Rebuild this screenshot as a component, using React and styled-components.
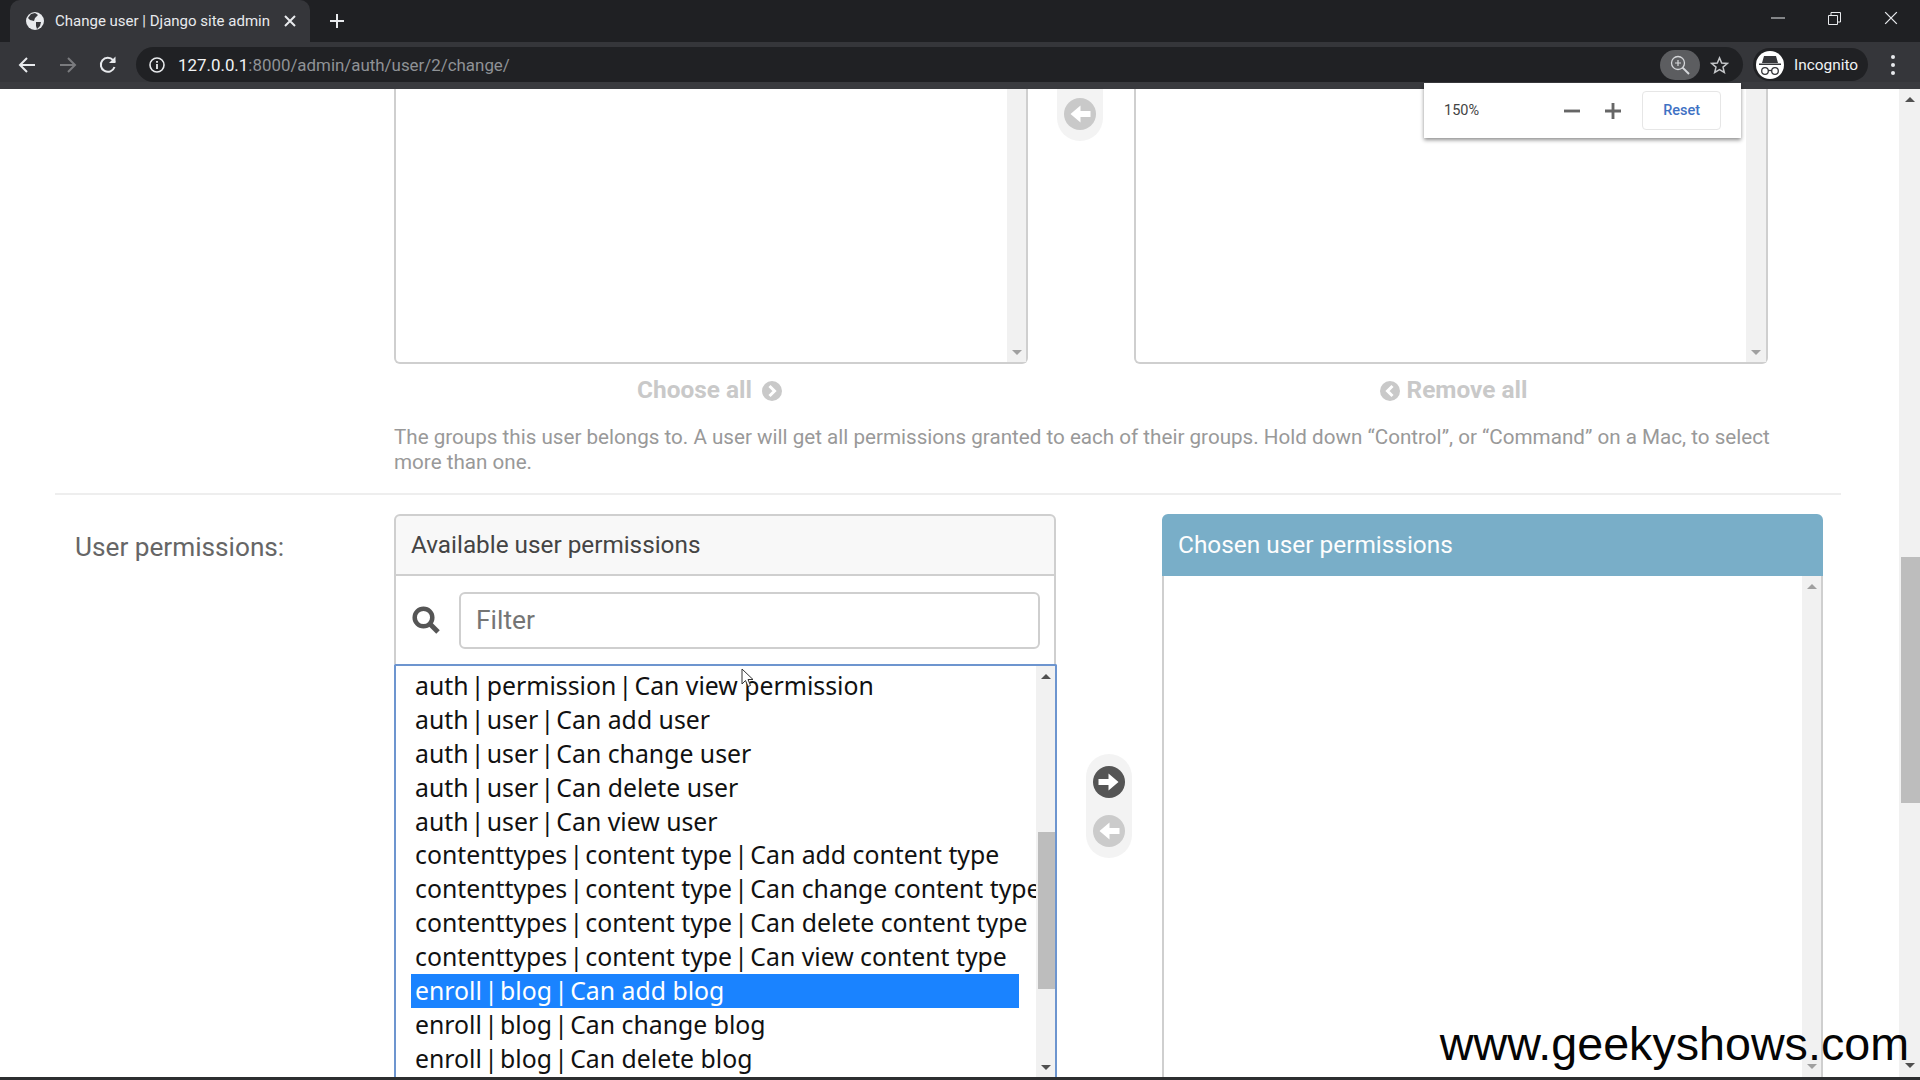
import React from "react";
import styled, { createGlobalStyle } from "styled-components";

const GlobalStyle = createGlobalStyle`
    html, body {
        margin: 0;
        padding: 0;
        background: white;
        overflow: hidden;
    }
    * {
        box-sizing: border-box;
    }
`;

const Frame = styled.div`
    width: 1920px;
    height: 1080px;
    display: flex;
    flex-direction: column;
    overflow: hidden;
    position: relative;
    font-family: Roboto, "Liberation Sans", sans-serif;
`;

/* browser chrome */

const TabStrip = styled.div`
    height: 42px;
    flex: none;
    background: #1f2023;
    display: flex;
    align-items: stretch;
    padding-left: 10px;
`;

const Tab = styled.div`
    width: 300px;
    background: #35363a;
    border-radius: 10px 10px 0 0;
    display: flex;
    align-items: center;
    padding: 0 0 0 16px;
    color: #e8eaed;
    font-size: 15px;
`;

const TabTitle = styled.span`
    margin-left: 11px;
    width: 229px;
    white-space: nowrap;
`;

const NewTab = styled.div`
    margin-left: 16px;
    width: 22px;
    display: flex;
    align-items: center;
    justify-content: center;
`;

const WindowControls = styled.div`
    margin-left: auto;
    display: flex;
    align-items: center;
    padding: 0 22px 6px 0;
    gap: 43px;
`;

const ToolBar = styled.div`
    height: 47px;
    flex: none;
    background: #35363a;
    border-bottom: 7px solid #3a3b3f;
    display: flex;
    align-items: center;
    padding: 5px 0 0 17px;
`;

const NavIcons = styled.div`
    display: flex;
    align-items: center;
    gap: 20.5px;
    width: 119px;
`;

const Omnibox = styled.div`
    width: 1607px;
    height: 35px;
    border-radius: 18px;
    background: #202124;
    display: flex;
    align-items: center;
    padding-left: 13px;
`;

const Url = styled.div`
    margin-left: 13px;
    font-size: 16.9px;
    color: #8f9296;
    white-space: nowrap;

    b {
        font-weight: 400;
        color: #f1f3f4;
    }
`;

const LensPill = styled.div`
    margin-left: auto;
    width: 40px;
    height: 30px;
    border-radius: 15px;
    background: #5c5d60;
    display: flex;
    align-items: center;
    justify-content: center;
`;

const StarWrap = styled.div`
    width: 43px;
    padding-right: 4px;
    display: flex;
    justify-content: center;
`;

const ProfilePill = styled.div`
    margin-left: 10px;
    width: 115px;
    height: 33px;
    border-radius: 17px;
    background: #202124;
    display: flex;
    align-items: center;
    padding-left: 3px;
    color: #f1f3f4;
    font-size: 15.4px;
`;

const Avatar = styled.div`
    width: 28px;
    height: 28px;
    border-radius: 50%;
    background: white;
    display: flex;
    align-items: center;
    justify-content: center;
    margin-right: 10px;
`;

const MenuDots = styled.div`
    margin-left: 23px;
    display: flex;
    flex-direction: column;
    gap: 4px;

    i {
        width: 4px;
        height: 4px;
        border-radius: 50%;
        background: #e8eaed;
    }
`;

const ZoomPopup = styled.div`
    position: absolute;
    left: 1424px;
    top: 83px;
    width: 317px;
    height: 55px;
    background: white;
    box-shadow: 0 2px 4px rgba(0, 0, 0, 0.45);
    display: flex;
    align-items: center;
    padding: 0 20px;
    color: #444;
    font-size: 14.5px;
    z-index: 5;
`;

const ZoomValue = styled.span`
    width: 108px;
`;

const ZoomStep = styled.div`
    width: 41px;
    display: flex;
    justify-content: center;
`;

const ResetButton = styled.button`
    margin-left: 9px;
    width: 79px;
    height: 39px;
    background: white;
    border: 1px solid #e6e6e6;
    border-radius: 4px;
    color: #3f72c4;
    font-family: Roboto, sans-serif;
    font-size: 14.5px;
    font-weight: 500;
`;

/* page */

const Viewport = styled.div`
    flex: 1;
    display: flex;
    min-height: 0;
`;

const Content = styled.div`
    width: 1899px;
    overflow: hidden;
`;

const GroupsRow = styled.div`
    display: flex;
    padding-left: 394px;
`;

const GroupColumn = styled.div`
    width: ${(p) => p.$width}px;
`;

const StubBox = styled.div`
    height: 275px;
    display: flex;
    justify-content: flex-end;
    border: 2px solid #cfcfcf;
    border-top: none;
    border-radius: 0 0 6px 6px;
`;

const ScrollTrack = styled.div`
    width: ${(p) => p.$width || 19}px;
    flex: none;
    background: #f1f1f1;
    display: flex;
    flex-direction: column;
    align-items: center;
    justify-content: ${(p) => (p.$downOnly ? "flex-end" : "space-between")};
    padding: ${(p) => p.$pad || "8px 0"};
    position: relative;
`;

const ArrowUp = styled.div`
    width: 0;
    height: 0;
    border-left: 5px solid transparent;
    border-right: 5px solid transparent;
    border-bottom: 5px solid ${(p) => p.$color || "#505050"};
`;

const ArrowDown = styled.div`
    width: 0;
    height: 0;
    border-left: 5px solid transparent;
    border-right: 5px solid transparent;
    border-top: 5px solid ${(p) => p.$color || "#505050"};
`;

const ScrollThumb = styled.div`
    position: absolute;
    right: 0;
    top: ${(p) => p.$top}px;
    width: ${(p) => p.$width}px;
    height: ${(p) => p.$height}px;
    background: #bdbdbd;
`;

const ActionRow = styled.div`
    height: 53px;
    display: flex;
    align-items: center;
    justify-content: center;
    gap: ${(p) => p.$gap}px;
    padding: ${(p) => p.$pad};
    color: #c9c9c9;
    font-size: 24.4px;
    font-weight: 700;
`;

const TopMoverColumn = styled.div`
    width: 106px;
    display: flex;
    justify-content: center;
    padding-right: 2px;
`;

const MoverPill = styled.div`
    width: 46px;
    padding: ${(p) => p.$pad};
    height: ${(p) => p.$height}px;
    border-radius: ${(p) => p.$radius};
    background: #f3f3f3;
    display: flex;
    flex-direction: column;
    align-items: center;
    gap: 17px;
`;

const HelpText = styled.p`
    margin: 8px 0 0 394px;
    width: 1385px;
    font-size: 20.63px;
    line-height: 25px;
    color: #999;
`;

const Divider = styled.div`
    height: 2px;
    background: #eeeeee;
    margin: 18px 58px 0 55px;
`;

const PermissionsRow = styled.div`
    display: flex;
    padding: 19px 0 0 75px;
`;

const FieldLabel = styled.label`
    width: 319px;
    padding-top: 17px;
    font-size: 26.2px;
    line-height: 32px;
    color: #666;
`;

const Selector = styled.div`
    width: ${(p) => p.$width}px;
    height: 564px;
    display: flex;
    flex-direction: column;
`;

const SelectorTitle = styled.div`
    height: 62px;
    flex: none;
    display: flex;
    align-items: center;
    padding: 0 0 1px ${(p) => (p.$chosen ? 14 : 15)}px;
    font-size: ${(p) => (p.$chosen ? 24.4 : 24.3)}px;
    border: 2px solid ${(p) => (p.$chosen ? "#79aec8" : "#cfcfcf")};
    border-radius: 6px 6px 0 0;
    background: ${(p) => (p.$chosen ? "#79aec8" : "#f8f8f8")};
    color: ${(p) => (p.$chosen ? "#fdfdfd" : "#444")};
`;

const FilterRow = styled.div`
    height: 88px;
    flex: none;
    display: flex;
    align-items: center;
    gap: 19px;
    padding: 0 14px 0 16px;
    border-left: 2px solid #cfcfcf;
    border-right: 2px solid #cfcfcf;
`;

const FilterInput = styled.div`
    flex: 1;
    height: 57px;
    border: 2px solid #cfcfcf;
    border-radius: 6px;
    display: flex;
    align-items: center;
    padding-left: 15px;
    font-size: 26.4px;
    color: #757575;
`;

const ListBox = styled.div`
    flex: 1;
    display: flex;
    min-height: 0;
    margin-right: -1px;
    border: 2px solid #6d95cf;
    border-bottom: none;
    border-radius: 2px 2px 0 0;
`;

const Options = styled.div`
    flex: 1;
    min-width: 0;
    overflow: hidden;
    padding: 3px 0 0 15px;
`;

const Option = styled.div`
    width: 608px;
    height: 33.9px;
    line-height: 33.9px;
    padding-left: 4px;
    white-space: nowrap;
    font-family: "Noto Sans", sans-serif;
    font-size: 24.8px;
    color: ${(p) => (p.$selected ? "white" : "#111")};
    background: ${(p) => (p.$selected ? "#1a83ff" : "transparent")};
`;

const Pipe = styled.span`
    margin: 0 -4.2px;
`;

const MiddleColumn = styled.div`
    width: 106px;
    padding: 240px 0 0 0;
    display: flex;
    justify-content: center;
    align-items: flex-start;
`;

const ChosenBody = styled.div`
    flex: 1;
    display: flex;
    justify-content: flex-end;
    border-left: 2px solid #cfcfcf;
    border-right: 2px solid #cfcfcf;
`;

const PageScrollbar = styled.div`
    width: 21px;
    flex: none;
    background: #f1f1f1;
    display: flex;
    flex-direction: column;
    align-items: center;
    justify-content: space-between;
    padding: 8px 0 9px;
    position: relative;
`;

const BottomEdge = styled.div`
    height: 3px;
    flex: none;
    background: #2d2e30;
`;

const Watermark = styled.div`
    position: absolute;
    right: 11px;
    top: 1017px;
    font-family: "Liberation Sans", Arial, sans-serif;
    font-size: 46.65px;
    line-height: 54px;
    color: #050505;
    z-index: 4;
`;

const Pointer = styled.svg`
    position: absolute;
    left: 741px;
    top: 668px;
    z-index: 3;
`;

/* icons */

const GlobeIcon = () => (
    <svg width="18" height="18" viewBox="0 0 18 18">
        <circle cx="9" cy="9" r="9" fill="#e8eaed" />
        <path d="M5 2 9 1 12 3 9 6 8 9 4 8 2 6ZM10 10 15 10 14 14 11 17 10 14Z" fill="#35363a" />
    </svg>
);

const Cross = ({ size = 12, color = "#e8eaed", width = 2 }) => (
    <svg width={size} height={size} viewBox="0 0 12 12">
        <path d="M1 1 11 11M11 1 1 11" stroke={color} strokeWidth={width} fill="none" />
    </svg>
);

const Plus = ({ size = 14, color = "#e8eaed", width = 2 }) => (
    <svg width={size} height={size} viewBox="0 0 14 14">
        <path d="M7 0V14M0 7H14" stroke={color} strokeWidth={width} fill="none" />
    </svg>
);

const Minus = ({ size = 14, color = "#666", width = 2 }) => (
    <svg width={size} height={size} viewBox="0 0 14 14">
        <path d="M0 7H14" stroke={color} strokeWidth={width} fill="none" />
    </svg>
);

const NavArrow = ({ back, color }) => (
    <svg width="20" height="18" viewBox="0 0 20 18" style={back ? undefined : { transform: "scaleX(-1)" }}>
        <path d="M18 9H3M10 2 3 9l7 7" stroke={color} strokeWidth="2" fill="none" />
    </svg>
);

const Reload = () => (
    <svg width="20" height="20" viewBox="0 0 20 20">
        <path d="M16.5 12a7 7 0 1 1-1.4-6.8L17 7" stroke="#e8eaed" strokeWidth="2" fill="none" />
        <path d="M17.5 1.5V8H11Z" fill="#e8eaed" />
    </svg>
);

const InfoIcon = () => (
    <svg width="16" height="16" viewBox="0 0 16 16">
        <circle cx="8" cy="8" r="7" stroke="#e8eaed" strokeWidth="1.6" fill="none" />
        <path d="M8 7v5M8 4v1.8" stroke="#e8eaed" strokeWidth="1.8" />
    </svg>
);

const Lens = () => (
    <svg width="20" height="20" viewBox="0 0 20 20">
        <circle cx="8" cy="8" r="6.5" stroke="#d5d7da" strokeWidth="1.3" fill="none" />
        <path d="M12.6 12.6 19 19" stroke="#d5d7da" strokeWidth="2" />
        <path d="M8 5v6M5 8h6" stroke="#d5d7da" strokeWidth="1.2" />
    </svg>
);

const Star = () => (
    <svg width="19" height="18" viewBox="0 0 20 19">
        <path d="M10 2l2.3 5.4 5.9.5-4.5 3.8 1.4 5.7L10 14.4l-5.1 3 1.4-5.7L1.800 7.900l5.900-.5Z" stroke="#c4c6c9" strokeWidth="1.600" fill="none" />
    </svg>
);

const SpyIcon = () => (
    <svg width="24" height="22" viewBox="0 0 24 22">
        <path d="M6 2h12l2 7H4Z M1 9.500h22v1.500H1Z" fill="#35363a" />
        <circle cx="7" cy="17" r="3.300" stroke="#35363a" strokeWidth="1.300" fill="none" />
        <circle cx="17" cy="17" r="3.300" stroke="#35363a" strokeWidth="1.300" fill="none" />
        <path d="M10 16.500h4" stroke="#35363a" strokeWidth="1.300" />
    </svg>
);

const Restore = () => (
    <svg width="13" height="13" viewBox="0 0 13 13">
        <path d="M.5 3.500h9v9h-9ZM3 3.500V.5h9.500V10H9.500" stroke="#e8eaed" strokeWidth="1" fill="none" />
    </svg>
);

const CircleArrow = ({ dir = "right", color, size = 32 }) => (
    <svg width={size} height={size} viewBox="0 0 32 32" style={{ flex: "none", transform: dir === "left" ? "scaleX(-1)" : undefined }}>
        <circle cx="16" cy="16" r="16" fill={color} />
        <path d="M5.500 13h10V7.500L25.500 16l-10 8.500V19h-10Z" fill="white" />
    </svg>
);

const CircleChevron = ({ dir = "right" }) => (
    <svg width="20" height="20" viewBox="0 0 20 20" style={{ flex: "none", marginTop: 2, transform: dir === "left" ? "scaleX(-1)" : undefined }}>
        <circle cx="10" cy="10" r="10" fill="#c9c9c9" />
        <path d="M7.500 5 12.500 10l-5 5" stroke="white" strokeWidth="3" fill="none" />
    </svg>
);

const SearchIcon = () => (
    <svg width="28" height="28" viewBox="0 0 28 28" style={{ flex: "none" }}>
        <circle cx="11.500" cy="11.500" r="8.800" stroke="#555" strokeWidth="4.500" fill="none" />
        <path d="M18 18 26 26" stroke="#555" strokeWidth="5" />
    </svg>
);

const permissions = [
    ["auth", "permission", "Can view permission"],
    ["auth", "user", "Can add user"],
    ["auth", "user", "Can change user"],
    ["auth", "user", "Can delete user"],
    ["auth", "user", "Can view user"],
    ["contenttypes", "content type", "Can add content type"],
    ["contenttypes", "content type", "Can change content type"],
    ["contenttypes", "content type", "Can delete content type"],
    ["contenttypes", "content type", "Can view content type"],
    ["enroll", "blog", "Can add blog"],
    ["enroll", "blog", "Can change blog"],
    ["enroll", "blog", "Can delete blog"],
];

const App = () => {
    return (
        <Frame>
            <GlobalStyle />
            <TabStrip>
                <Tab>
                    <GlobeIcon />
                    <TabTitle>Change user | Django site admin</TabTitle>
                    <Cross />
                </Tab>
                <NewTab><Plus /></NewTab>
                <WindowControls>
                    <Minus size={14} color="#e8eaed" width={1} />
                    <Restore />
                    <Cross size={14} width={1.100} />
                </WindowControls>
            </TabStrip>
            <ToolBar>
                <NavIcons>
                    <NavArrow back color="#e8eaed" />
                    <NavArrow color="#7a7b7e" />
                    <Reload />
                </NavIcons>
                <Omnibox>
                    <InfoIcon />
                    <Url><b>127.0.0.1</b>:8000/admin/auth/user/2/change/</Url>
                    <LensPill><Lens /></LensPill>
                    <StarWrap><Star /></StarWrap>
                </Omnibox>
                <ProfilePill>
                    <Avatar><SpyIcon /></Avatar>
                    Incognito
                </ProfilePill>
                <MenuDots><i /><i /><i /></MenuDots>
            </ToolBar>

            <ZoomPopup>
                <ZoomValue>150%</ZoomValue>
                <ZoomStep><Minus size={16} width={2.500} /></ZoomStep>
                <ZoomStep><Plus size={16} color="#666" width={2.500} /></ZoomStep>
                <ResetButton>Reset</ResetButton>
            </ZoomPopup>

            <Viewport>
                <Content>
                    <GroupsRow>
                        <GroupColumn $width={634}>
                            <StubBox>
                                <ScrollTrack $downOnly $pad="0 0 7px">
                                    <ArrowDown $color="#a0a0a0" />
                                </ScrollTrack>
                            </StubBox>
                            <ActionRow $gap={10} $pad="0 3px 2px 0">Choose all <CircleChevron /></ActionRow>
                        </GroupColumn>
                        <TopMoverColumn>
                            <MoverPill $height={52} $radius="0 0 23px 23px" $pad="9px 0 0">
                                <CircleArrow dir="left" color="#c9c9c9" />
                            </MoverPill>
                        </TopMoverColumn>
                        <GroupColumn $width={634}>
                            <StubBox>
                                <ScrollTrack $width={20} $downOnly $pad="0 0 7px">
                                    <ArrowDown $color="#a0a0a0" />
                                </ScrollTrack>
                            </StubBox>
                            <ActionRow $gap={7} $pad="0 0 2px 5px"><CircleChevron dir="left" /> Remove all</ActionRow>
                        </GroupColumn>
                    </GroupsRow>
                    <HelpText>
                        The groups this user belongs to. A user will get all permissions granted to each of their groups. Hold down “Control”, or “Command” on a Mac, to select more than one.
                    </HelpText>
                    <Divider />
                    <PermissionsRow>
                        <FieldLabel>User permissions:</FieldLabel>
                        <Selector $width={662}>
                            <SelectorTitle>Available user permissions</SelectorTitle>
                            <FilterRow>
                                <SearchIcon />
                                <FilterInput>Filter</FilterInput>
                            </FilterRow>
                            <ListBox>
                                <Options>
                                    {permissions.map(([app, model, perm], i) => (
                                        <Option key={app + model + perm} $selected={i === 9}>
                                            {app} <Pipe>|</Pipe> {model} <Pipe>|</Pipe> {perm}
                                        </Option>
                                    ))}
                                </Options>
                                <ScrollTrack>
                                    <ArrowUp />
                                    <ScrollThumb $top={166} $width={17} $height={157} />
                                    <ArrowDown />
                                </ScrollTrack>
                            </ListBox>
                        </Selector>
                        <MiddleColumn>
                            <MoverPill $height={104} $radius="23px" $pad="12px 0 0">
                                <CircleArrow color="#555" />
                                <CircleArrow dir="left" color="#cbcbcb" />
                            </MoverPill>
                        </MiddleColumn>
                        <Selector $width={661}>
                            <SelectorTitle $chosen>Chosen user permissions</SelectorTitle>
                            <ChosenBody>
                                <ScrollTrack $pad="8px 0 9px">
                                    <ArrowUp $color="#a0a0a0" />
                                    <ArrowDown $color="#a0a0a0" />
                                </ScrollTrack>
                            </ChosenBody>
                        </Selector>
                    </PermissionsRow>
                </Content>
                <PageScrollbar>
                    <ArrowUp />
                    <ScrollThumb $top={468} $width={19} $height={246} />
                    <ArrowDown />
                </PageScrollbar>
            </Viewport>
            <BottomEdge />

            <Pointer width="14" height="20" viewBox="0 0 14 20">
                <path d="M1 1V16L4.500 12.500 7 18.500 9.500 17.500 7 11.500H12Z" fill="white" stroke="#333" strokeWidth="1" />
            </Pointer>
            <Watermark>www.geekyshows.com</Watermark>
        </Frame>
    );
};

export default App;
